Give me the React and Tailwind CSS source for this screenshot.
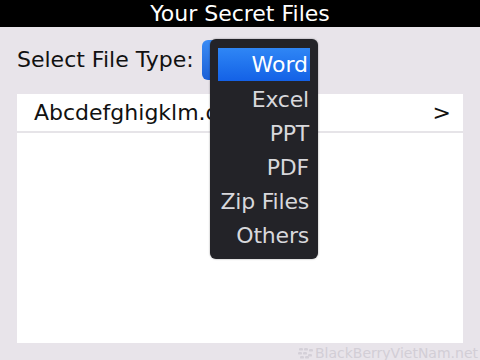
import React from 'react';

const types = ['Word', 'Excel', 'PPT', 'PDF', 'Zip Files', 'Others'];

function BBLogo() {
    return (
        <svg width="15" height="12" viewBox="0 0 15 12" className="mr-[2px]">
            {[[1, 1], [6, 1], [11, 2], [0, 5], [5, 5], [10, 7], [2, 9], [7, 9]].map(([x, y], i) => (
                <rect key={i} x={x} y={y} width="4" height="2.6" rx="1.2" fill="#d4d0d8" />
            ))}
        </svg>
    );
}

export default function App() {
    return (
        <div className="w-[480px] h-[360px] bg-[#e8e4ea] flex flex-col overflow-hidden" style={{ fontFamily: '"DejaVu Sans", sans-serif' }}>
            {/* Title bar */}
            <div className="h-[27px] bg-black flex items-center justify-center text-white text-[22px] leading-none">
                Your Secret Files
            </div>

            {/* File type row */}
            <div className="flex items-center pl-[17px] mt-[13px] h-[40px]">
                <span className="w-[185px] shrink-0 whitespace-nowrap text-[22px] text-[#111] leading-none">Select File Type:</span>
                <div className="relative w-[40px] h-[40px] rounded-l-[6px] bg-gradient-to-b from-[#3b8cf5] to-[#1a5fd6]">
                    {/* Dropdown */}
                    <div className="absolute left-[8px] top-[-1px] w-[108px] h-[220px] bg-[#232328] rounded-[6px] pt-[9px] px-[8px] z-10 shadow-[0_0_2px_rgba(0,0,0,0.4)]">
                        {types.map((t, i) => (
                            <div
                                key={t}
                                className={
                                    i === 0
                                        ? 'h-[33px] mb-[1px] flex items-center justify-end pr-[2px] whitespace-nowrap text-[22px] text-white bg-gradient-to-b from-[#2f86f5] to-[#1461e6]'
                                        : 'h-[34px] flex items-center justify-end pr-[1px] whitespace-nowrap text-[22px] tracking-[-0.2px] text-[#d8d8dc]'
                                }
                            >
                                {t}
                            </div>
                        ))}
                    </div>
                </div>
            </div>

            {/* File list */}
            <div className="mx-[17px] mt-[14px] h-[249px] bg-white">
                <div className="h-[39px] flex items-center justify-between pl-[17px] pr-[12px] border-b-[2px] border-[#e6e4e8] text-[22px] text-[#111]">
                    <span>Abcdefghigklm.doc</span>
                    <span>&gt;</span>
                </div>
            </div>

            {/* Watermark */}
            <div className="flex items-center justify-end pr-[2px] mt-[3px] text-[14px] text-[#d2ced6] leading-none">
                <BBLogo />
                BlackBerryVietNam.net
            </div>
        </div>
    );
}
